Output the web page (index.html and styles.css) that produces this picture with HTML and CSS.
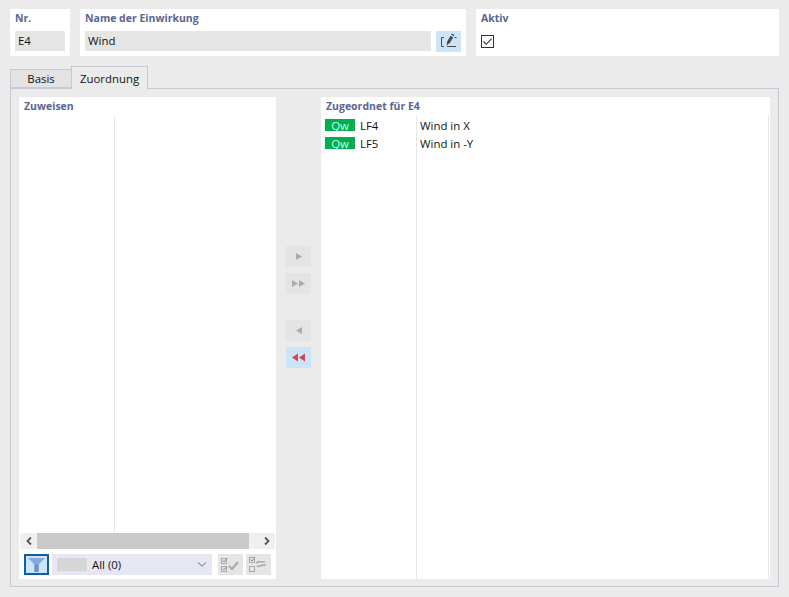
FILE: index.html
```html
<!DOCTYPE html>
<html lang="de">
<head>
<meta charset="utf-8">
<title>Einwirkung</title>
<link rel="stylesheet" href="styles.css">
</head>
<body>
<div class="top">
  <section class="card card-nr">
    <div class="label">Nr.</div>
    <div class="field field-nr">E4</div>
  </section>
  <section class="card card-name">
    <div class="label">Name der Einwirkung</div>
    <div class="name-row">
      <div class="field field-name">Wind</div>
      <button class="edit-btn" aria-label="Bearbeiten">
        <svg width="19" height="17" viewBox="0 0 19 17" fill="none">
          <path d="M5 4.5H2.5V13.5H5" stroke="#4a4a4a" stroke-width="1"/>
          <path d="M8 13.5H17" stroke="#4a4a4a" stroke-width="1"/>
          <path d="M7.6 12.5L8.2 8.4L11.6 2.8L14.2 4.4L10.8 10Z" fill="#4a4a4a"/>
          <path d="M12.2 1.8L13 .6L15.4 2.1L14.7 3.3Z" fill="#4a4a4a"/>
          <path d="M15.5 4.5H17.5" stroke="#4a4a4a" stroke-width="1"/>
        </svg>
      </button>
    </div>
  </section>
  <section class="card card-active">
    <div class="label">Aktiv</div>
    <div class="check">
      <svg width="11" height="11" viewBox="0 0 11 11" fill="none"><path d="M1.5 5.5L4.3 8.3L9.6 2.6" stroke="#333" stroke-width="1.1"/></svg>
    </div>
  </section>
</div>

<nav class="tabs">
  <div class="tab">Basis</div>
  <div class="tab tab-active">Zuordnung</div>
</nav>

<main class="panel">
  <section class="list list-left">
    <div class="label list-title">Zuweisen</div>
    <div class="columns columns-left"><div class="col-a"></div></div>
    <div class="scrollbar">
      <span class="sb-arrow"><svg width="8" height="10" viewBox="0 0 8 10" fill="none"><path d="M6 1.5L2.5 5L6 8.5" stroke="#555" stroke-width="1.8"/></svg></span>
      <div class="sb-track"></div>
      <span class="sb-arrow"><svg width="8" height="10" viewBox="0 0 8 10" fill="none"><path d="M2 1.5L5.5 5L2 8.5" stroke="#555" stroke-width="1.8"/></svg></span>
    </div>
    <div class="toolbar">
      <button class="filter-btn" aria-label="Filter">
        <svg width="17" height="14" viewBox="0 0 17 14"><path d="M0 0H17L10.5 6.5V14H6.5V6.5Z" fill="#86a8e0"/><path d="M6.5 6.5H10.5V14H6.5Z" fill="#6d8fcb"/></svg>
      </button>
      <div class="select">
        <span class="swatch"></span>
        <span class="select-text">All (0)</span>
        <svg class="chev" width="10" height="7" viewBox="0 0 12 7" fill="none"><path d="M1 1L6 5.5L11 1" stroke="#666" stroke-width="1.1"/></svg>
      </div>
      <button class="tool-btn tool-first" aria-label="Alle wählen">
        <svg width="21" height="17" viewBox="0 0 21 17" fill="none">
          <rect x="1.5" y="2.5" width="5" height="5" stroke="#aaa"/><rect x="1.5" y="10.5" width="5" height="5" stroke="#aaa"/>
          <path d="M2.5 4.5L4 6L7 2.5M2.5 12.5L4 14L7 10.5" stroke="#8a8a8a"/>
          <path d="M9 10L12 13L18 6" stroke="#a8a8a8" stroke-width="2"/>
        </svg>
      </button>
      <button class="tool-btn" aria-label="Auswahl umkehren">
        <svg width="21" height="17" viewBox="0 0 21 17" fill="none">
          <rect x="1.5" y="1.5" width="5" height="5" stroke="#aaa"/><rect x="1.5" y="10.5" width="5" height="5" stroke="#aaa"/>
          <path d="M2.5 3.5L4 5L7 1.5" stroke="#8a8a8a"/>
          <path d="M8 7C11 4.5 13 6.5 17 6M18 9C15 8.5 12 10 9 10.5" stroke="#a8a8a8" stroke-width="1.5"/>
        </svg>
      </button>
    </div>
  </section>

  <div class="mover">
    <button class="move-btn"><svg width="8" height="9" viewBox="0 0 8 9"><path d="M1 1L7 4.5L1 8Z" fill="#ababab"/></svg></button>
    <button class="move-btn"><svg width="15" height="9" viewBox="0 0 15 9"><path d="M1 1L7 4.5L1 8ZM8 1L14 4.5L8 8Z" fill="#ababab"/></svg></button>
    <button class="move-btn move-gap"><svg width="8" height="9" viewBox="0 0 8 9"><path d="M7 1L1 4.5L7 8Z" fill="#ababab"/></svg></button>
    <button class="move-btn move-on"><svg width="15" height="9" viewBox="0 0 15 9"><path d="M7 .5L1 4.5L7 8.5ZM14 .5L8 4.5L14 8.5Z" fill="#d9434f"/></svg></button>
  </div>

  <section class="list list-right">
    <div class="label list-title">Zugeordnet für E4</div>
    <div class="columns columns-right">
      <div class="col-b">
        <div class="row"><span class="badge">Qw</span><span class="code">LF4</span></div>
        <div class="row"><span class="badge">Qw</span><span class="code">LF5</span></div>
      </div>
      <div class="col-c">
        <div class="row">Wind in X</div>
        <div class="row">Wind in -Y</div>
      </div>
    </div>
  </section>
</main>
</body>
</html>
```
FILE: styles.css
```css
* { box-sizing: border-box; }
html, body { margin: 0; height: 100%; }
body {
  width: 789px;
  height: 597px;
  overflow: hidden;
  background: #ebebeb;
  padding: 9px 10px 0;
  font-family: "Open Sans", "Noto Sans", sans-serif;
  font-size: 11.4px;
  color: #111;
}
button { border: 0; padding: 0; margin: 0; display: flex; align-items: center; justify-content: center; }

.top { display: flex; gap: 10px; height: 47px; }
.card { background: #fff; padding: 0 5px; }
.card-nr { width: 60px; }
.card-name { width: 386px; }
.card-active { width: 303px; }
.label {
  color: #5a6590;
  font-weight: 700;
  font-size: 10.5px;
  line-height: 18px;
  height: 22px;
}
.field { background: #e5e5e5; height: 20px; line-height: 20px; }
.field-nr { padding-left: 3px; }
.field-name { width: 346px; padding-left: 3px; }
.name-row { display: flex; gap: 5px; }
.edit-btn { width: 25px; height: 21px; background: #cce4f7; }
.check {
  width: 13px;
  height: 13px;
  margin-top: 4px;
  border: 1px solid #333;
  display: flex;
  align-items: center;
  justify-content: center;
}

.tabs { display: flex; align-items: flex-end; height: 22px; margin-top: 10px; position: relative; z-index: 1; }
.tab {
  width: 61px;
  height: 19px;
  background: #e3e3e3;
  border: 1px solid #c8c8d6;
  border-right: 0;
  text-align: center;
  line-height: 18px;
}
.tab-active {
  width: 77px;
  height: 23px;
  margin-bottom: -1px;
  background: #ebebeb;
  border-right: 1px solid #c8c8d6;
  border-bottom: 0;
  line-height: 24px;
}

.panel {
  width: 769px;
  height: 499px;
  border: 1px solid #c8c8d6;
  padding: 8px;
  display: flex;
}
.list { background: #fff; height: 482px; display: flex; flex-direction: column; }
.list-left { width: 257px; }
.list-right { width: 449px; }
.list-title { height: 19px; padding: 0 0 0 5px; line-height: 18px; flex: none; }
.columns { flex: 1; min-height: 0; display: flex; }
.col-a { width: 96px; border-right: 1px solid #e6e6e6; }
.scrollbar { height: 16px; margin: 1px 1px 0; display: flex; background: #f0f0f0; flex: none; }
.sb-arrow { width: 17px; display: flex; align-items: center; justify-content: center; }
.sb-track { width: 212px; background: #c9c9c9; }
.scrollbar .sb-arrow:last-child { width: 26px; padding-left: 9px; }
.toolbar { height: 30px; padding: 5px 5px 4px; display: flex; flex: none; }
.filter-btn { width: 25px; height: 21px; background: #cce4f7; border: 2px solid #0f5ea8; margin-right: 3px; }
.select {
  width: 160px;
  height: 21px;
  background: #e6e7f2;
  display: flex;
  align-items: center;
  padding: 0 5px;
}
.swatch { width: 30px; height: 13px; background: #d6d6d6; margin-right: 5px; }
.select-text { flex: 1; }
.tool-btn { width: 25px; height: 21px; background: #e5e5e5; margin-left: 3px; }
.tool-first { margin-left: 6px; }

.mover { width: 45px; padding-top: 149px; display: flex; flex-direction: column; align-items: center; gap: 6px; }
.move-btn { width: 25px; height: 21px; background: #e4e4e4; flex: none; }
.move-gap { margin-top: 20px; }
.move-on { background: #cce4f7; }

.columns-right { margin-right: 1px; border-right: 1px solid #e6e6e6; }
.col-b { width: 96px; border-right: 1px solid #e6e6e6; padding-left: 4px; }
.col-c { flex: 1; padding-left: 3px; }
.row { height: 18px; display: flex; align-items: center; }
.badge {
  width: 30px;
  height: 12px;
  background: #00b050;
  color: #d8f5e3;
  text-align: center;
  line-height: 13px;
  font-size: 11.4px;
}
.code { margin-left: 5px; }
```
